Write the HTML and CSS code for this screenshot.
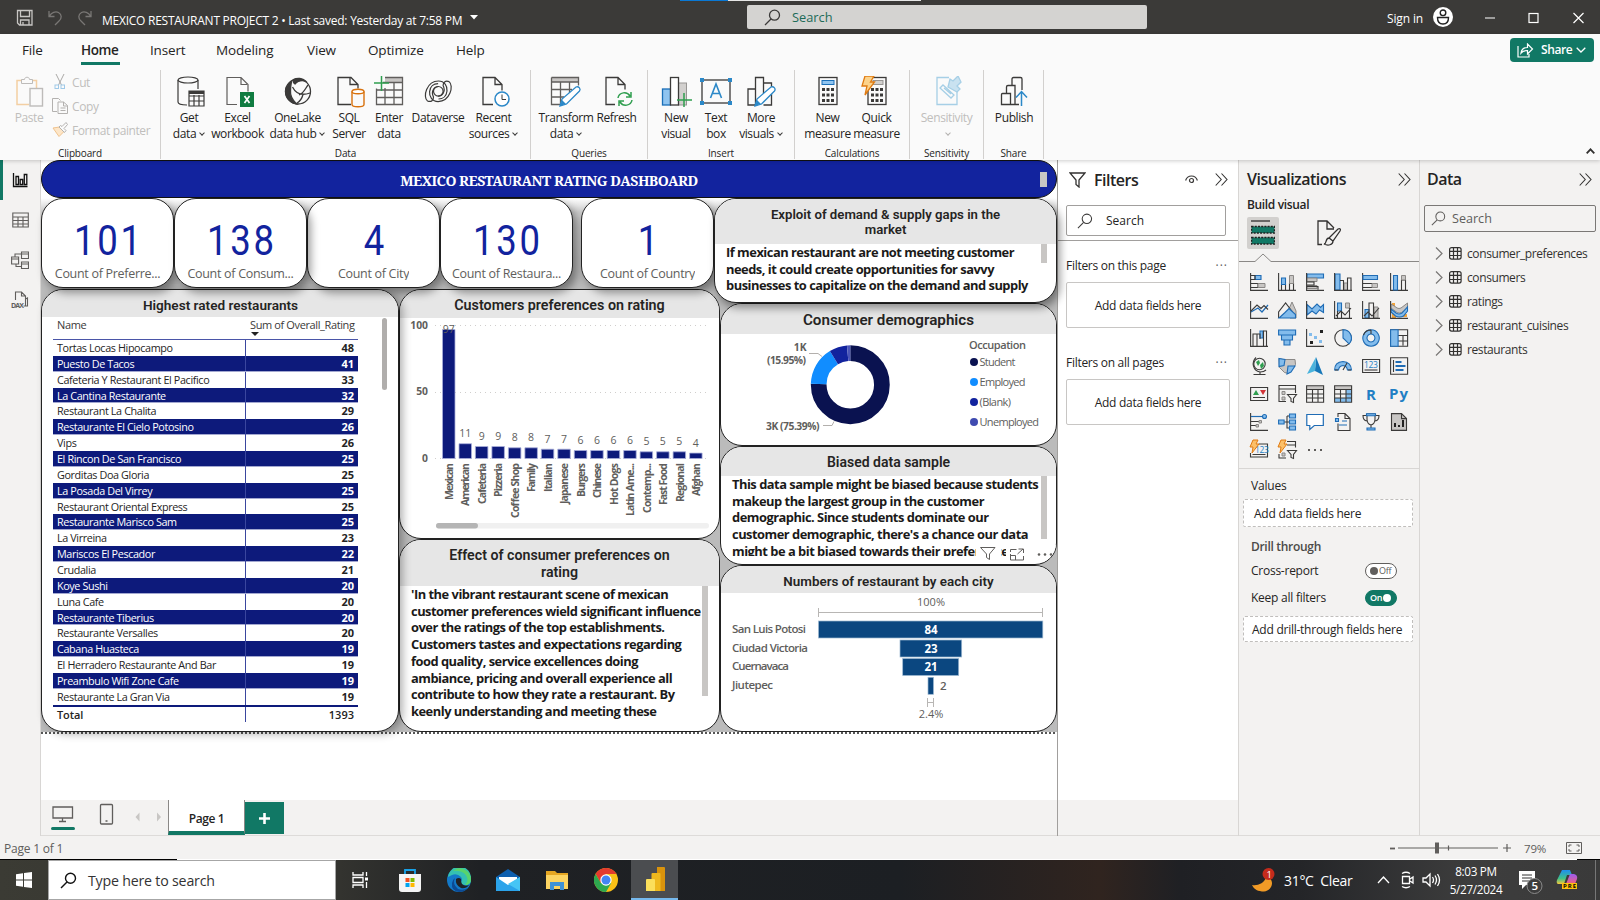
FILE: index.html
```html
<!DOCTYPE html>
<html lang="en">
<head>
<meta charset="utf-8">
<title>MEXICO RESTAURANT PROJECT 2</title>
<link rel="stylesheet" href="styles.css">
</head>
<body>
<div class="app">
  <header class="titlebar">
    <svg class="tb-quick" width="100" height="34" viewBox="0 0 100 34" fill="none">
      <path d="M17.5 10.500h14.500v14.500h-12.500l-2-2zM20.500 10.500v6h9v-6M20.500 25v-5h8.500v5M23 22v3" stroke="#c8c6c4" stroke-width="1.300"/>
      <path d="M49 11v5.500h5.500M49.500 16c2-3.500 6-5 9-3.500c3.500 2 3.500 6 .5 8.500l-4 4" stroke="#797775" stroke-width="1.300"/>
      <path d="M91 11v5.500h-5.500M90.500 16c-2-3.500-6-5-9-3.500c-3.500 2-3.500 6-.5 8.500l4 4" stroke="#797775" stroke-width="1.300"/>
    </svg>
    <span class="tb-title">MEXICO RESTAURANT PROJECT 2 • Last saved: Yesterday at 7:58 PM</span>
    <svg class="tb-caret" width="8" height="5"><path d="M0 0h8l-4 4.500z" fill="#fff"/></svg>
    <div class="tb-strip"><i></i></div>
    <div class="tb-search">
      <svg width="17" height="17" viewBox="0 0 17 17" fill="none" stroke="#3b3a39" stroke-width="1.300"><circle cx="10.500" cy="6.200" r="5"/><path d="M7 10l-6 6"/></svg>
      <span>Search</span>
    </div>
    <span class="tb-sign">Sign in</span>
    <svg class="tb-user" width="20" height="20" viewBox="0 0 20 20"><circle cx="10" cy="10" r="10" fill="#fff"/><circle cx="10" cy="5.800" r="2.800" fill="none" stroke="#222" stroke-width="1.400"/><path d="M4.500 10.500h11c0 4-2 6.500-5.500 6.500s-5.500-2.500-5.500-6.500z" fill="none" stroke="#222" stroke-width="1.400"/></svg>
    <svg class="tb-win" width="100" height="12" viewBox="0 0 100 12" fill="none" stroke="#fff" stroke-width="1.200"><path d="M1 6h10M89.500 1l10 10M99.500 1l-10 10"/><rect x="45" y="1.500" width="9" height="9"/></svg>
  </header>

  <div class="ribbon">
    <nav class="menu">
      <span class="m-file">File</span><span class="m-home">Home</span><span class="m-ins">Insert</span><span class="m-mod">Modeling</span><span class="m-view">View</span><span class="m-opt">Optimize</span><span class="m-help">Help</span>
      <div class="share"><svg width="17" height="15" viewBox="0 0 17 15" fill="none" stroke="#fff" stroke-width="1.200"><path d="M1 3v11h11v-3M4 10c.5-3.500 3-5.500 6.500-5.500v-3.500l5 5l-5 5v-3.500c-3 0-5 .7-6.500 2.500z"/></svg><span>Share</span><svg width="10" height="6" viewBox="0 0 10 6" fill="none" stroke="#fff" stroke-width="1.300"><path d="M.7.700l4.300 4.300l4.300-4.300"/></svg></div>
    </nav>
    <div class="groups">
      <section class="group g-clip">
        <div class="items">
          <div class="item off w-paste"><svg width="30" height="32" viewBox="0 0 30 32" fill="none"><path d="M8 4.500h-5v24h12" stroke="#f3cfa3" stroke-width="1.500"/><path d="M18 4.500h4.500v8" stroke="#f3cfa3" stroke-width="1.500"/><path d="M7.500 7.500v-4h3c0-3 5-3 5 0h3v4z" stroke="#bdbbb9"/><rect x="16" y="12.500" width="12.500" height="17.500" fill="#fafafa" stroke="#bdbbb9" stroke-width="1.400"/></svg><span>Paste</span></div>
          <div class="cliplist">
            <div><svg width="16" height="16" viewBox="0 0 16 16" fill="none"><path d="M4 0l5.500 11M12 0l-5.500 11" stroke="#aaa8a6"/><rect x="3" y="11" width="3.500" height="3.500" stroke="#9fc9e8"/><rect x="9" y="11" width="3.500" height="3.500" stroke="#9fc9e8"/></svg><span>Cut</span></div>
            <div><svg width="16" height="16" viewBox="0 0 16 16" fill="none" stroke="#b3b1af"><path d="M5 13.500h-4.500v-13h6l2 2M6 4h5.500l4 3.500v8h-9.500zM11.500 4v4h4M8.500 10h5M8.500 12.500h5"/></svg><span>Copy</span></div>
            <div><svg width="16" height="16" viewBox="0 0 16 16" fill="none"><path d="M1 6l6 8.500l5-5l-4.500-4.500z" fill="#fde6c8" stroke="#f0c38e"/><path d="M7 5l5.500 5.500l1.500-2l-2-2l3.500-4l-1.500-2l-4 4l-1.500-1z" stroke="#b3b1af" fill="#fafafa"/></svg><span>Format painter</span></div>
          </div>
        </div>
        <label>Clipboard</label>
      </section>
      <section class="group g-data">
        <div class="items">
          <div class="item w44"><svg width="32" height="32" viewBox="0 0 32 32" fill="none" stroke="#3b3a39" stroke-width="1.200"><ellipse cx="15" cy="4" rx="10" ry="3"/><path d="M5 4v22c0 1.500 3 3 9 3M25 4v9"/><path d="M16 15h15v15h-15zM16 20h15M16 25h15M21 19v11M26 19v11" fill="#fafafa"/><path d="M16 16.500h15" stroke-width="3"/></svg><span>Get<br>data<i class="cv"></i></span></div>
          <div class="item w53"><svg width="32" height="32" viewBox="0 0 32 32" fill="none"><path d="M15 28.500h-10v-27h14l7 7v7M19 1.500v7h6" stroke="#605e5c" stroke-width="1.200"/><rect x="18" y="16" width="14" height="15" fill="#107c41"/><path d="M22.500 20l5 7M27.500 20l-5 7" stroke="#fff" stroke-width="1.700"/></svg><span>Excel<br>workbook</span></div>
          <div class="item w67"><svg width="32" height="32" viewBox="0 0 32 32" fill="none" stroke="#3b3a39" stroke-width="1.300"><circle cx="16" cy="15.500" r="12.500"/><path d="M9.500 5.500c-5 4-7 9-5.500 13.500c2 5 6 8 10.500 9c-4-4-6.500-8-6-13c0-4 .500-7 1-9.500z" fill="#3b3a39"/><path d="M11.500 3.500c4-2 9-1.500 12 1.500c-4-1-8 0-10.500 3c-1.500-1-2-3-1.500-4.500z" fill="#3b3a39"/><path d="M10.500 11c3 6 9 9 17.500 6M21 18.500c-1 4-3 7-6.500 9M26 9c-3 4-4 8-9 10"/></svg><span>OneLake<br>data hub<i class="cv"></i></span></div>
          <div class="item w36"><svg width="32" height="32" viewBox="0 0 32 32" fill="none"><path d="M18 28.500h-13v-27h13l7 7v4M17 1.500v7h8" stroke="#3b3a39" stroke-width="1.300"/><path d="M19 15.500v13c0 3 12 3 12 0v-13" fill="#fafafa" stroke="#d8710d" stroke-width="1.400"/><ellipse cx="25" cy="15.500" rx="6" ry="2.300" fill="#fff" stroke="#d8710d" stroke-width="1.400"/></svg><span>SQL<br>Server</span></div>
          <div class="item w44"><svg width="32" height="32" viewBox="0 0 32 32" fill="none"><path d="M12 2h18v4h-18z" fill="#c8c6c4"/><path d="M12 1.500h17.500v27h-26v-16M10 6.500h19M4 14h25M4 21.500h25M12 12v16M21 7v21" stroke="#605e5c" stroke-width="1.300"/><path d="M8.500 0v15M1 7h15" stroke="#2f9e4f" stroke-width="1.500"/></svg><span>Enter<br>data</span></div>
          <div class="item w54"><svg width="32" height="32" viewBox="0 0 32 32" fill="none" stroke="#3b3a39" stroke-width="1.200"><circle cx="16.300" cy="15.300" r="4.800"/><path id="dv" d="M5.500 25c-5-4-1-20 11-20c6 0 9 5 8.500 10c-.5 5-4 8-8.500 8M5.500 25c4 1.500 6-1 6-4c-3-6 1-10.500 5-10.500"/><use href="#dv" transform="rotate(180 16.300 15.300)"/></svg><span>Dataverse</span></div>
          <div class="item w57"><svg width="32" height="32" viewBox="0 0 32 32" fill="none"><path d="M15 28.500h-10v-27h12l7 7v6M17 1.500v7h7" stroke="#3b3a39" stroke-width="1.300"/><circle cx="24" cy="23" r="7" fill="#fff" stroke="#2b88c8" stroke-width="1.500"/><path d="M24 18.500v5h4" stroke="#3b3a39"/></svg><span>Recent<br>sources<i class="cv"></i></span></div>
        </div>
        <label>Data</label>
      </section>
      <section class="group g-query">
        <div class="items">
          <div class="item w58"><svg width="32" height="32" viewBox="0 0 32 32" fill="none"><path d="M2 2h26v4h-26z" fill="#c8c6c4"/><path d="M1.500 1.500h27v8M1.500 1.500v27h10M1.500 6h27M2 13.500h20M2 21h12M10.500 6v22M19.500 6v11" stroke="#605e5c" stroke-width="1.300"/><path d="M10 30l2-7l14-12c3-1 5 2 3.500 4l-13 13z" fill="#fff" stroke="#2b88c8" stroke-width="1.300"/><path d="M10 30l2-6l4 4z" fill="#2b88c8"/></svg><span>Transform<br>data<i class="cv"></i></span></div>
          <div class="item w43"><svg width="32" height="32" viewBox="0 0 32 32" fill="none"><path d="M14 28.500h-9v-27h12l7 7v5M17 1.500v7h7" stroke="#3b3a39" stroke-width="1.300"/><path d="M17 22c1-6 9-7 12-2M30 16v5h-5M31 24c-1 6-9 7-12 2M18 30v-5h5" stroke="#2f9e4f" stroke-width="1.500"/></svg><span>Refresh</span></div>
        </div>
        <label>Queries</label>
      </section>
      <section class="group g-insert">
        <div class="items">
          <div class="item w42"><svg width="32" height="32" viewBox="0 0 32 32" fill="none"><rect x="2.500" y="13" width="8" height="16" fill="#8fc4f0" stroke="#1a6fb8" stroke-width="1.300"/><rect x="18.500" y="7" width="8" height="22" fill="#d2d0ce" stroke="#979593"/><rect x="10.500" y="1.500" width="8" height="27.500" fill="#fff" stroke="#3b3a39" stroke-width="1.300"/><path d="M24 17v14M17 24h15" stroke="#2f9e4f" stroke-width="1.500"/></svg><span>New<br>visual</span></div>
          <div class="item w38"><svg width="32" height="32" viewBox="0 0 32 32" fill="none"><rect x="2" y="4" width="28" height="23" stroke="#3b3a39" stroke-width="1.300"/><path d="M0 2h4v4h-4zM28 2h4v4h-4zM0 25h4v4h-4zM28 25h4v4h-4z" fill="#2b88c8"/><path d="M10.500 22l5.500-14l5.500 14M12.500 17.500h7" stroke="#2b88c8" stroke-width="1.600"/></svg><span>Text<br>box</span></div>
          <div class="item w52"><svg width="32" height="32" viewBox="0 0 32 32" fill="none" stroke="#3b3a39" stroke-width="1.300"><path d="M3 13h7.500v16h-7.500zM10.500 29v-27.500h8v17M18.500 7h8v5M26.500 18v11h-8"/><path d="M10 30l2-7l14-12c3-1 5 2 3.500 4l-13 13z" fill="#fff" stroke="#2b88c8"/><path d="M10 30l2-6l4 4z" fill="#2b88c8" stroke="none"/></svg><span>More<br>visuals<i class="cv"></i></span></div>
        </div>
        <label>Insert</label>
      </section>
      <section class="group g-calc">
        <div class="items">
          <div class="item w49"><svg width="32" height="32" viewBox="0 0 32 32" fill="none"><rect x="7" y="1.500" width="18" height="27" stroke="#3b3a39" stroke-width="1.300"/><rect x="10" y="4.500" width="12" height="4" fill="#8fc4f0" stroke="#1a6fb8"/><path d="M10 13.500h12M10 19h12M10 24.500h12" stroke="#3b3a39" stroke-width="3" stroke-dasharray="3 1.500"/></svg><span>New<br>measure</span></div>
          <div class="item w49"><svg width="32" height="32" viewBox="0 0 32 32" fill="none"><rect x="7" y="1.500" width="18" height="27" stroke="#3b3a39" stroke-width="1.300"/><rect x="12" y="4.500" width="10" height="4" fill="#d2d0ce" stroke="#979593"/><path d="M10 13.500h12M10 19h12M10 24.500h12" stroke="#3b3a39" stroke-width="3" stroke-dasharray="3 1.500"/><path d="M4 0h9l-3.500 6h4l-9.500 13l2-9h-5z" fill="#fcd38b" stroke="#e07b12" stroke-width="1.300"/></svg><span>Quick<br>measure</span></div>
        </div>
        <label>Calculations</label>
      </section>
      <section class="group g-sens">
        <div class="items">
          <div class="item off w73"><svg width="32" height="32" viewBox="0 0 32 32" fill="none" stroke="#a6cfe6" stroke-width="1.300"><path d="M18 1.500h-12v27h20v-14"/><path d="M9 12l3-3l11 10l-3 3zM13 12l7 6"/><path d="M17 11l9 5l3-3l-3-3l4-4l-3-6l-5 5l-3-2z" fill="#c9e2f0"/></svg><span>Sensitivity<br><i class="cv"></i></span></div>
        </div>
        <label>Sensitivity</label>
      </section>
      <section class="group g-share">
        <div class="items">
          <div class="item w60"><svg width="32" height="32" viewBox="0 0 32 32" fill="none" stroke="#3b3a39" stroke-width="1.300"><path d="M3.500 18.500q0-1 1-1h8v11h-9zM8.500 17v-6q0-1.500 1.500-1.500h7v19h-4.500M14 9v-6q0-1.500 1.500-1.500h7q1.500 0 1.500 1.500v11M17 28.500h4"/><path d="M23.500 30v-14M18 21.500l5.500-6l5.500 6" stroke="#2b88c8" stroke-width="1.500"/></svg><span>Publish</span></div>
        </div>
        <label>Share</label>
      </section>
      <svg class="collapse" width="9" height="6" viewBox="0 0 9 6" fill="none" stroke="#323130" stroke-width="1.800"><path d="M.7 5.300l3.800-4l3.800 4"/></svg>
    </div>
  </div>

  <div class="workspace">
    <aside class="rail">
      <div class="rail-item on"><svg width="17" height="16" viewBox="0 0 17 16" fill="none" stroke="#111" stroke-width="1.300"><path d="M1.500 1v13.500h14M4 12.500v-8h2.500v8zM8.200 12.500v-5h2.500v5zM12.300 12.500v-10h2.500v10z"/></svg></div>
      <div class="rail-item"><svg width="17" height="16" viewBox="0 0 17 16" fill="none" stroke="#605e5c" stroke-width="1.100"><path d="M.8 1h15.500v14h-15.500zM.8 5h15.500M.8 8.500h15.500M.8 12h15.500M6 5v10M11 5v10"/></svg></div>
      <div class="rail-item"><svg width="18" height="18" viewBox="0 0 18 18" fill="none" stroke="#605e5c" stroke-width="1.100"><path d="M.6 6h7v7h-7zM.6 8h7M10.500 1h7v6.500h-7zM10.500 3h7M10.500 11h7v6.500h-7zM10.500 13h7M4 6v-3h6M5 13v2.500h5"/></svg></div>
      <div class="rail-item"><svg width="18" height="18" viewBox="0 0 18 18" fill="none" stroke="#605e5c" stroke-width="1.100"><path d="M4.500 9v-8h6l4 4v10h-2M10.500 1v4h4M14.500 8l2-1v8h-2"/><text x="0" y="16.500" font-size="7" font-weight="700" fill="#605e5c" stroke="none" textLength="13">DAX</text></svg></div>
    </aside>

    <main class="stage">
      <div class="report">
        <div class="banner"><h1>MEXICO RESTAURANT RATING DASHBOARD</h1><i></i></div>
        <div class="board">
          <div class="left">
            <div class="cards">
              <div class="card"><b>101</b><span>Count of Preferre...</span></div>
              <div class="card"><b>138</b><span>Count of Consum...</span></div>
              <div class="card"><b>4</b><span class="cut">Count of City</span></div>
              <div class="card"><b>130</b><span>Count of Restaura...</span></div>
              <div class="card last"><b>1</b><span class="cut">Count of Country</span></div>
            </div>
            <div class="lower">
              <section class="panel p-table">
                <h2>Highest rated restaurants</h2>
                <div class="tbl-wrap">
                  <div class="tbl">
                    <div class="th"><span>Name</span><span>Sum of Overall_Rating<i></i></span></div>
                    <div class="tr"><span>Tortas Locas Hipocampo</span><b>48</b></div>
                    <div class="tr"><span>Puesto De Tacos</span><b>41</b></div>
                    <div class="tr"><span>Cafeteria Y Restaurant El Pacifico</span><b>33</b></div>
                    <div class="tr"><span>La Cantina Restaurante</span><b>32</b></div>
                    <div class="tr"><span>Restaurant La Chalita</span><b>29</b></div>
                    <div class="tr"><span>Restaurante El Cielo Potosino</span><b>26</b></div>
                    <div class="tr"><span>Vips</span><b>26</b></div>
                    <div class="tr"><span>El Rincon De San Francisco</span><b>25</b></div>
                    <div class="tr"><span>Gorditas Doa Gloria</span><b>25</b></div>
                    <div class="tr"><span>La Posada Del Virrey</span><b>25</b></div>
                    <div class="tr"><span>Restaurant Oriental Express</span><b>25</b></div>
                    <div class="tr"><span>Restaurante Marisco Sam</span><b>25</b></div>
                    <div class="tr"><span>La Virreina</span><b>23</b></div>
                    <div class="tr"><span>Mariscos El Pescador</span><b>22</b></div>
                    <div class="tr"><span>Crudalia</span><b>21</b></div>
                    <div class="tr"><span>Koye Sushi</span><b>20</b></div>
                    <div class="tr"><span>Luna Cafe</span><b>20</b></div>
                    <div class="tr"><span>Restaurante Tiberius</span><b>20</b></div>
                    <div class="tr"><span>Restaurante Versalles</span><b>20</b></div>
                    <div class="tr"><span>Cabana Huasteca</span><b>19</b></div>
                    <div class="tr"><span>El Herradero Restaurante And Bar</span><b>19</b></div>
                    <div class="tr"><span>Preambulo Wifi Zone Cafe</span><b>19</b></div>
                    <div class="tr"><span>Restaurante La Gran Via</span><b>19</b></div>
                    <div class="total"><b>Total</b><b>1393</b></div>
                  </div>
                  <i class="vbar"></i>
                </div>
              </section>
              <div class="mid">
                <section class="panel p-bar">
                  <h2>Customers preferences on rating</h2>
                  <svg class="chart" width="319" height="215" viewBox="400 318 319 215">
                    <g stroke="#d0cecc" stroke-dasharray="1 4"><path d="M435 325.500h274M435 392.500h274M435 458.500h274"/></g>
                    <g class="ax" text-anchor="end"><text x="428" y="329">100</text><text x="428" y="395">50</text><text x="428" y="462">0</text></g>
                    <g fill="#0d1a7b" stroke="#a9aedb" stroke-width=".8">
                      <path d="M442.500 329.500h12.500v129h-12.500zM459 443.700h12.500v14.800h-12.500zM475.400 446.500h12.500v12h-12.500zM491.900 446.500h12.500v12h-12.500zM508.400 447.800h12.500v10.700h-12.500zM524.900 447.800h12.500v10.700h-12.500zM541.300 449.200h12.500v9.300h-12.500zM557.800 449.200h12.500v9.300h-12.500zM574.300 450.500h12.500v8h-12.500zM590.700 450.500h12.500v8h-12.500zM607.200 450.500h12.500v8h-12.500zM623.700 450.500h12.500v8h-12.500zM640.100 451.800h12.500v6.700h-12.500zM656.600 451.800h12.500v6.700h-12.500zM673.100 451.800h12.500v6.700h-12.500zM689.600 453.100h12.500v5.400h-12.500z"/>
                    </g>
                    <g class="vals" text-anchor="middle">
                      <text x="448.700" y="333">97</text><text x="465.200" y="436.500">11</text><text x="481.700" y="439.500">9</text><text x="498.200" y="439.500">9</text><text x="514.700" y="440.500">8</text><text x="531.100" y="440.500">8</text><text x="547.600" y="442.500">7</text><text x="564" y="442.500">7</text><text x="580.500" y="443.500">6</text><text x="597" y="443.500">6</text><text x="613.500" y="443.500">6</text><text x="630" y="443.500">6</text><text x="646.400" y="444.500">5</text><text x="662.800" y="444.500">5</text><text x="679.300" y="444.500">5</text><text x="695.800" y="446.500">4</text>
                    </g>
                    <g class="cats" text-anchor="end">
                      <text transform="translate(452.500 463)rotate(-90)" textLength="37">Mexican</text><text transform="translate(469 463)rotate(-90)" textLength="43">American</text><text transform="translate(485.500 463)rotate(-90)" textLength="41">Cafeteria</text><text transform="translate(502 463)rotate(-90)" textLength="34">Pizzeria</text><text transform="translate(518.500 463)rotate(-90)" textLength="55">Coffee Shop</text><text transform="translate(535 463)rotate(-90)" textLength="29">Family</text><text transform="translate(551.500 463)rotate(-90)" textLength="29">Italian</text><text transform="translate(568 463)rotate(-90)" textLength="41">Japanese</text><text transform="translate(584.500 463)rotate(-90)" textLength="34">Burgers</text><text transform="translate(601 463)rotate(-90)" textLength="35">Chinese</text><text transform="translate(617.500 463)rotate(-90)" textLength="42">Hot Dogs</text><text transform="translate(634 463)rotate(-90)" textLength="53">Latin Ame...</text><text transform="translate(650.500 463)rotate(-90)" textLength="50">Contemp...</text><text transform="translate(667 463)rotate(-90)" textLength="42">Fast Food</text><text transform="translate(683.500 463)rotate(-90)" textLength="39">Regional</text><text transform="translate(700 463)rotate(-90)" textLength="33">Afghan</text>
                    </g>
                    <rect x="436" y="523" width="273" height="5.500" rx="2.700" fill="#f0f0f0"/><rect x="436" y="523" width="42" height="5.500" rx="2.700" fill="#b5b5b5"/>
                  </svg>
                </section>
                <section class="panel p-effect">
                  <h2>Effect of consumer preferences on<br>rating</h2>
                  <div class="note"><p>'In the vibrant restaurant scene of mexican<br>customer preferences wield significant influence<br>over the ratings of the top establishments.<br>Customers tastes and expectations regarding<br>food quality, service excellences doing<br>ambiance, pricing and overall experience all<br>contribute to how they rate a restaurant. By<br>keenly understanding and meeting these</p><i></i></div>
                </section>
              </div>
            </div>
          </div>
          <div class="right">
            <section class="panel p-exploit">
              <h2>Exploit of demand &amp; supply gaps in the<br>market</h2>
              <div class="note"><p>If mexican restaurant are not meeting customer<br>needs, it could create opportunities for savvy<br>businesses to capitalize on the demand and supply</p><i></i></div>
            </section>
            <section class="panel p-demo">
              <h2>Consumer demographics</h2>
              <svg class="chart" width="335" height="110" viewBox="721 334 335 110">
                <g transform="rotate(-90 850.300 384.700)" fill="none" stroke-width="15.700">
                  <circle cx="850.300" cy="384.700" r="31.600" stroke="#0a1250" pathLength="100" stroke-dasharray="75.390 100"/>
                  <circle cx="850.300" cy="384.700" r="31.600" stroke="#118dff" pathLength="100" stroke-dasharray="15.950 100" stroke-dashoffset="-75.390"/>
                  <circle cx="850.300" cy="384.700" r="31.600" stroke="#12239e" pathLength="100" stroke-dasharray="7.300 100" stroke-dashoffset="-91.340"/>
                  <circle cx="850.300" cy="384.700" r="31.600" stroke="#4a55b8" pathLength="100" stroke-dasharray="1.360 100" stroke-dashoffset="-98.640"/>
                </g>
                <path d="M809 353.500h9l4 3M823 425.500h9l2-4" fill="none" stroke="#b3b0ad"/>
                <g class="dl" text-anchor="end"><text x="806.500" y="351">1K</text><text x="806" y="364" textLength="39">(15.95%)</text><text x="819.500" y="430" textLength="53.500">3K (75.39%)</text></g>
                <text class="lg-t" x="969" y="349" textLength="57">Occupation</text>
                <circle cx="974" cy="362" r="4" fill="#0a1250"/><circle cx="974" cy="382" r="4" fill="#118dff"/><circle cx="974" cy="402" r="4" fill="#12239e"/><circle cx="974" cy="422" r="4" fill="#3f4bb0"/>
                <g class="lg"><text x="979.500" y="366" textLength="36">Student</text><text x="979.500" y="386" textLength="46">Employed</text><text x="979.500" y="406" textLength="31.500">(Blank)</text><text x="979.500" y="426" textLength="59.500">Unemployed</text></g>
              </svg>
            </section>
            <section class="panel p-bias">
              <h2>Biased data sample</h2>
              <div class="note"><p>This data sample might be biased because students<br>makeup the largest group in the customer<br>demographic. Since students dominate our<br>customer demographic, there's a chance our data<br>might be a bit biased towards their preference :</p><i></i></div>
              <svg class="hovertools" width="80" height="17" viewBox="0 0 80 17"><path d="M0 0h25v17h-25zM30 0h50v17h-50z" fill="#fff"/><path d="M4.500 2.500h14.500l-5.500 6.500v5.500l-3-2v-3.500zM34.500 7v-2.500h6M34.500 9v6h13v-4M47.500 8v-4h-5M34.500 10.500h5v4.500M41.500 9l5.500-5" fill="none" stroke="#605e5c"/><circle cx="63" cy="9.500" r="1.300" fill="#605e5c"/><circle cx="69" cy="9.500" r="1.300" fill="#605e5c"/><circle cx="75" cy="9.500" r="1.300" fill="#605e5c"/></svg>
            </section>
            <section class="panel p-city">
              <h2>Numbers of restaurant by each city</h2>
              <svg class="chart" width="335" height="137" viewBox="721 593 335 137">
                <path d="M818.500 608v9M1042.500 608v9M818.500 612.500h224M927.500 698v9M933.500 698v9M927.500 702.500h6" fill="none" stroke="#b8b6b4"/>
                <g fill="#0b4780" stroke="#9db9d2" stroke-width=".7"><rect x="818.500" y="621" width="224.300" height="17"/><rect x="900" y="640" width="61.700" height="17"/><rect x="902.700" y="658.500" width="56" height="17"/><rect x="928" y="677.300" width="5.500" height="17"/></g>
                <g class="pc" text-anchor="middle"><text x="931" y="606">100%</text><text x="931" y="718">2.4%</text></g>
                <g class="fl"><text x="732" y="633" textLength="74">San Luis Potosi</text><text x="732" y="652" textLength="76">Ciudad Victoria</text><text x="732" y="670" textLength="57">Cuernavaca</text><text x="732" y="689" textLength="41">Jiutepec</text><text x="940" y="690">2</text></g>
                <g class="fv" text-anchor="middle"><text x="931" y="634">84</text><text x="931" y="652.500">23</text><text x="931" y="671">21</text></g>
              </svg>
            </section>
          </div>
        </div>
        <div class="page-edge"></div>
      </div>
      <div class="pages">
        <svg width="123" height="34" viewBox="45 801 123 34" fill="none"><path d="M53 808h19.500v11h-19.500zM62.500 819v3M59 822.500h7" stroke="#605e5c" stroke-width="1.300"/><rect x="51" y="828" width="24" height="3" rx="1.500" fill="#117865"/><rect x="100.500" y="805.500" width="12" height="19.500" rx="1" stroke="#605e5c" stroke-width="1.300"/><path d="M105.500 822h2" stroke="#605e5c" stroke-width="1.500"/><path d="M139.500 813.500v9l-4-4.500zM157 813.500v9l4-4.500z" fill="#c8c6c4"/></svg>
        <div class="tab">Page 1</div>
        <div class="add"><svg width="11" height="11"><path d="M5.500 0v11M0 5.500h11" stroke="#fff" stroke-width="2.600"/></svg></div>
      </div>
    </main>

    <aside class="filters">
      <header><svg width="17" height="16" viewBox="0 0 17 16" fill="none" stroke="#323130" stroke-width="1.300"><path d="M1 1h15l-6 7v7l-3-2.500v-4.500z"/></svg><h3>Filters</h3><svg class="eye" width="13" height="9" viewBox="0 0 13 9" fill="none" stroke="#3b3a39" stroke-width="1.200"><path d="M.6 5.500c2-6 9.800-6 11.800 0"/><circle cx="6.500" cy="5.500" r="2"/></svg><svg class="dbl" width="13" height="13" viewBox="0 0 13 13" fill="none" stroke="#323130" stroke-width="1.100"><path d="M.7.500l5.500 6l-5.500 6M6.500.500l5.500 6l-5.500 6"/></svg></header>
      <div class="f-search"><svg width="16" height="16" viewBox="0 0 17 17" fill="none" stroke="#3b3a39" stroke-width="1.100"><circle cx="10.500" cy="6.200" r="5"/><path d="M7 10l-6 6"/></svg><span>Search</span></div>
      <div class="f-block"><div class="f-head"><span>Filters on this page</span><i>···</i></div><div class="f-drop">Add data fields here</div></div>
      <div class="f-block second"><div class="f-head"><span>Filters on all pages</span><i>···</i></div><div class="f-drop">Add data fields here</div></div>
      <div class="f-foot"></div>
    </aside>

    <aside class="viz">
      <header><h3>Visualizations</h3><svg class="dbl" width="13" height="13" viewBox="0 0 13 13" fill="none" stroke="#323130" stroke-width="1.100"><path d="M.7.500l5.500 6l-5.500 6M6.500.500l5.500 6l-5.500 6"/></svg></header>
      <div class="v-sub">Build visual</div>
      <div class="v-modes">
        <div class="v-mode on"><svg width="24" height="26" viewBox="0 0 24 26"><path d="M0 1h19" stroke="#222" stroke-width="1.200"/><path d="M.6 6.500h22.800v6.500h-22.800zM.6 17.500h22.800v6.500h-22.800z" fill="#117865" stroke="#222" stroke-width="1.300" stroke-dasharray="2 1.200"/></svg></div>
        <div class="v-mode"><svg width="25" height="26" viewBox="0 0 25 26" fill="none" stroke="#323130" stroke-width="1.300"><path d="M5 24.500h-4v-23.500h9l7 7M10 1v8h7"/><path d="M12 18l9-9c2-1 3 0 2 2l-7 10l-4-3zM7 24c3 0 1-6 5-6l4 3c0 4-5 5-9 3z" fill="#f3f2f1"/></svg></div>
      </div>
      <svg class="v-rule" width="180" height="10" viewBox="0 0 180 10" fill="none" stroke="#8a8886"><path d="M0 8.500h16l8-7.500l8 7.500h148"/></svg>
      <div class="v-grid">
        <svg viewBox="0 0 18 18"><path class="k" d="M.6 0v17.400h17.400"/><path class="b" d="M5 2.500h6v4h-6z"/><path class="k" d="M1 2.500h4v4h-4M1 10.500h7v4h-7"/><path class="g" d="M8 10.500h7v4h-7z"/></svg>
        <svg viewBox="0 0 18 18"><path class="k" d="M.6 0v17.400h17.400M3.500 17v-5.500h4v5.500M11.500 17v-6.500h4v6.500"/><path class="b" d="M3.500 5h4v6.500h-4z"/><path class="g" d="M11.500 2.500h4v8h-4z"/></svg>
        <svg viewBox="0 0 18 18"><path class="b" d="M1 1h16.500v4h-16.500z"/><path class="g" d="M1 5h10v3.500h-10zM1 12.500h10v3h-10z"/><path class="k" d="M.6 0v17.400h17.400M1 9h7v3h-7M1 13.500h11v3"/></svg>
        <svg viewBox="0 0 18 18"><path class="b" d="M1 1h5v16h-5z"/><path class="g" d="M10 10h3.500v7h-3.500z"/><path class="k" d="M.6 0v17.400h17.400M6 7.500h3.500v9.500M13.500 17v-12h3.500v12"/></svg>
        <svg viewBox="0 0 18 18"><path class="k" d="M.6 0v17.400h17.400M1 10.500h9M1 14.500h9"/><path class="b" d="M1 2.500h14.500v4h-14.500z"/><path class="g" d="M10 10.500h5.500v4h-5.500z"/></svg>
        <svg viewBox="0 0 18 18"><path class="k" d="M.6 0v17.400h17.400M11.500 17v-10h4v10"/><path class="b" d="M3.500 2.500h4v14.500h-4z"/><path class="g" d="M11.500 2.500h4v4.500h-4z"/></svg>

        <svg viewBox="0 0 18 18"><path class="k" d="M.6 0v17.400h17.400"/><path class="bl" d="M1 11l7-4l4 4l6-7"/><path class="k" d="M1 10l6-6l4 3.500l3-3l4 4"/></svg>
        <svg viewBox="0 0 18 18"><path class="g" d="M10 10l4-9l4 9v7h-6z"/><path class="k" d="M.6 17v-6l7-9l7 9" fill="#fff"/><path class="b" d="M1 17l6-5.500l4-4l6.500 6v3.500z"/></svg>
        <svg viewBox="0 0 18 18"><path class="b" d="M1 3.500l5 4.500l5-5l3.500 3.500l3-3v8l-4-2.500l-3.500 4l-4-3l-5 4z"/><path class="k" d="M.6 0v17.400h17.400"/></svg>
        <svg viewBox="0 0 18 18"><path class="b" d="M3.500 2h4v8h-4z"/><path class="g" d="M11.500 2h4v5h-4z"/><path class="k" d="M.6 0v17.400h17.400M3.500 10v7M7.500 10v7M15.500 7v10M2 15l5-5l4 4l6-7"/></svg>
        <svg viewBox="0 0 18 18"><path class="b" d="M3 8.500h4v8.500h-4z"/><path class="g" d="M12 6h4v11h-4z"/><path class="k" d="M.6 0v17.400h17.400M7 17v-15h4.500v15M2 15l4-4l4 4l7-8"/></svg>
        <svg viewBox="0 0 18 18"><path d="M2 2h3v3h-3zM2 12h4v5h-4zM12 13h5v3h-5z" fill="#f2a33a"/><path class="g" d="M1 3l4 2.500q4 4 8 0l4.500-3.500v5l-4 3q-4 4-8.500 0l-4-3z"/><path class="b" d="M1 8l5 4q3 2 6 0l5.500-6v4l-4 5q-4 2-8 0l-4.500-4z"/><path class="k" d="M.6 0v17.400h17.400"/></svg>

        <svg viewBox="0 0 18 18"><path class="b" d="M10 2h3v7h-3z"/><path class="k" d="M.6 0v17.400h17.400M3 17v-12h4v12M7 5h3v5M13.500 17v-15h3v15"/></svg>
        <svg viewBox="0 0 18 18"><path class="b" d="M.6 1h17v5h-17zM3.500 6h11v5h-11zM6 11h6v5h-6z"/></svg>
        <svg viewBox="0 0 18 18"><path class="k" d="M.6 0v17.400h17.400"/><path d="M4 12h3v3h-3zM14 1h3v3h-3z" fill="#222"/><path d="M3 4h3v3h-3zM8 7h3v3h-3zM13 11h3v3h-3z" fill="#83bcec"/></svg>
        <svg viewBox="0 0 18 18"><circle class="k" cx="9" cy="9" r="8.200" fill="#fff"/><path class="b" d="M9 .8a8.200 8.200 0 0 1 6 14l-6-5.800z"/></svg>
        <svg viewBox="0 0 18 18"><path class="b" fill-rule="evenodd" d="M9 .8a8.200 8.200 0 1 0 .1 0zM9 5a4 4 0 1 1-.1 0z"/><path class="k" d="M9 1v4M1.500 6q2-5 7.500-5"/></svg>
        <svg viewBox="0 0 18 18"><path class="k" d="M.6.800h17v16.500h-17zM8 6.500h10M8 12h10M13 6.500v10"/><path class="b" d="M.6.800h7.500v16.500h-7.500z"/></svg>

        <svg viewBox="0 0 18 18"><circle class="k" cx="9.500" cy="7" r="5.700"/><path class="k" d="M6 .5c-5 5-3 13 4 14.500c3 0 5-1 6-2M10 15v2.500M3.500 17.500h12"/><path d="M6 5l3-2l1 3l-2 3zM10 8l3-3l1 4l-3 3z" fill="#2f9e4f"/></svg>
        <svg viewBox="0 0 18 18"><path class="g" d="M1 1.500l4 1h12l.5 5l-3 4l-4 5l-4-1l-5-5z"/><path class="b" d="M1 1.500l6 1l-1 6l-5 1zM10 9h7l-4 6l-4 2z"/></svg>
        <svg viewBox="0 0 18 18"><path d="M10 0l7 18l-8-4z" fill="#1677b8"/><path d="M10 0l-9 17l8-3z" fill="#4ab3dc"/></svg>
        <svg viewBox="0 0 18 18"><path class="b" d="M.6 13q0-8 8.400-8.500q8 .5 8.500 8.500h-4q-.5-4-4.500-4.500q-4 .5-4.500 4.500z"/><path class="k" d="M9 13l4-7M1 13h3M14 13h3"/></svg>
        <svg viewBox="0 0 18 18"><path class="k" d="M.6 2.500h17v13h-17z"/><path class="k" d="M2.500 13h13"/><text x="2" y="11" class="n">123</text></svg>
        <svg viewBox="0 0 18 18"><path class="k" d="M.6.800h17v16.500h-17zM3.500 3v12"/><path d="M5.500 5h6M5.500 9h10M5.500 13h8" stroke="#1f6cb5" stroke-width="2"/></svg>

        <svg viewBox="0 0 18 18"><path class="k" d="M.6 2.500h17v13h-17zM3 12.500h12"/><path d="M3 10l3-5l3 5z" fill="#2f9e4f"/><path d="M10 5h6l-3 5z" fill="#d13438"/></svg>
        <svg viewBox="0 0 18 18"><path class="k" d="M17.500 8v-7.500h-16.500v16h7M1 4h16.500"/><path class="g" d="M4 6.500h3v3h-3zM4 12h3v3h-3z"/><path class="k" d="M9.500 9.500h9l-3 4v4l-2.500-1v-3z" fill="#fff"/></svg>
        <svg viewBox="0 0 18 18"><path d="M1 1h16.500v3h-16.500z" fill="#c8c6c4"/><path class="k" d="M.6.800h17v16.500h-17zM.6 4.500h17M.6 9h17M.6 13h17M6.500 4v13M12 4v13"/></svg>
        <svg viewBox="0 0 18 18"><path d="M1 1h16.500v3h-16.500z" fill="#c8c6c4"/><path d="M12 4h6v13h-17v-4h11z" fill="#83bcec"/><path class="k" d="M.6.800h17v16.500h-17zM.6 4.500h17M.6 9h17M.6 13h17M6.500 4v13M12 4v13"/></svg>
        <svg viewBox="0 0 18 18"><text x="4" y="14.500" class="ltr">R</text></svg>
        <svg viewBox="0 0 18 18"><text x="-1" y="14" class="ltr" textLength="19">Py</text></svg>

        <svg viewBox="0 0 18 18"><path class="k" d="M.6 0v17.400h17.400M1 8.500h8M1 12.500h5"/><path class="bl" d="M1 3.500h12"/><circle class="b" cx="14.500" cy="3.500" r="2"/><path class="g" d="M9 7.500h2.500v2.500h-2.500zM6 11.500h2.500v2.500h-2.500z"/></svg>
        <svg viewBox="0 0 18 18"><path class="k" d="M6 9h6M9 3v12h3M9 3h3"/><path class="b" d="M.6 7h5.500v4h-5.500zM11.500 1h6v4h-6zM11.500 7h6v4h-6zM11.500 13h6v4h-6z"/></svg>
        <svg viewBox="0 0 18 18"><path d="M.8 1.500h16.500v11h-9l-4.500 4v-4h-3z" fill="#fff" stroke="#1f6cb5" stroke-width="1.200"/></svg>
        <svg viewBox="0 0 18 18"><path class="k" d="M4 4v-3.500h7l5 5v12h-12v-7M11 .5v5h5"/><path class="b" d="M1.500 5.500h3v3h-3z"/><path class="bl" d="M8 8h5M5 12h8"/></svg>
        <svg viewBox="0 0 18 18"><path class="k" d="M5 1h8v5q0 5-4 6q-4-1-4-6zM5 2.500h-4q0 5 4 5.500M13 2.500h4q0 5-4 5.500M9 12v3"/><path class="b" d="M4.500.800h9v2h-9zM5 15h8v2h-8z"/></svg>
        <svg viewBox="0 0 18 18"><path class="k fillg" d="M1.500.600h10l5 5v11.800h-15z"/><path class="k" d="M11.500.600v5h5"/><path d="M5 14v-4M9 14v-2M13 14v-7" stroke="#222" stroke-width="2"/></svg>

        <svg viewBox="0 0 18 18"><path class="k" d="M9 3h8.500v13h-17v-4M2.500 13.500h13"/><text x="5" y="11.500" class="n">123</text><path d="M3-1h5l-2 4h3l-7 9l1-6h-3z" fill="#fcc069" stroke="#e07b12"/></svg>
        <svg viewBox="0 0 18 18"><path class="k" d="M9 .5h8.500v6M1 13v4h7M9 4h8"/><path class="g" d="M4 12h3v3h-3z"/><path class="k" d="M9.500 9.500h9l-3 4v4l-2.500-1v-3z" fill="#fff"/><path d="M3-1h5l-2 4h3l-7 9l1-6h-3z" fill="#fcc069" stroke="#e07b12"/></svg>
        <svg viewBox="0 0 18 18"><path d="M2 8h2v2h-2zM8 8h2v2h-2zM14 8h2v2h-2z" fill="#605e5c"/></svg>
      </div>
      <div class="v-wells">
        <div class="v-label">Values</div>
        <div class="v-drop">Add data fields here</div>
        <div class="v-label strong">Drill through</div>
        <div class="v-row"><span>Cross-report</span><div class="toggle"><i></i><em>Off</em></div></div>
        <div class="v-row"><span>Keep all filters</span><div class="toggle on"><em>On</em><i></i></div></div>
        <div class="v-drop drill">Add drill-through fields here</div>
      </div>
    </aside>

    <aside class="data">
      <header><h3>Data</h3><svg class="dbl" width="13" height="13" viewBox="0 0 13 13" fill="none" stroke="#323130" stroke-width="1.100"><path d="M.7.500l5.500 6l-5.500 6M6.500.500l5.500 6l-5.500 6"/></svg></header>
      <div class="d-search"><svg width="15" height="15" viewBox="0 0 17 17" fill="none" stroke="#605e5c" stroke-width="1.200"><circle cx="10.500" cy="6.200" r="5"/><path d="M7 10l-6 6"/></svg><span>Search</span></div>
      <ul>
        <li><svg viewBox="0 0 27 13"><path class="ch" d="M1 .5l6 6l-6 6"/><rect x="14.600" y=".6" width="11.500" height="11.500" rx="2"/><path d="M15 4.300h11M15 8.500h11M18.500 1v11M22.500 1v11"/></svg>consumer_preferences</li>
        <li><svg viewBox="0 0 27 13"><path class="ch" d="M1 .5l6 6l-6 6"/><rect x="14.600" y=".6" width="11.500" height="11.500" rx="2"/><path d="M15 4.300h11M15 8.500h11M18.500 1v11M22.500 1v11"/></svg>consumers</li>
        <li><svg viewBox="0 0 27 13"><path class="ch" d="M1 .5l6 6l-6 6"/><rect x="14.600" y=".6" width="11.500" height="11.500" rx="2"/><path d="M15 4.300h11M15 8.500h11M18.500 1v11M22.500 1v11"/></svg>ratings</li>
        <li><svg viewBox="0 0 27 13"><path class="ch" d="M1 .5l6 6l-6 6"/><rect x="14.600" y=".6" width="11.500" height="11.500" rx="2"/><path d="M15 4.300h11M15 8.500h11M18.500 1v11M22.500 1v11"/></svg>restaurant_cuisines</li>
        <li><svg viewBox="0 0 27 13"><path class="ch" d="M1 .5l6 6l-6 6"/><rect x="14.600" y=".6" width="11.500" height="11.500" rx="2"/><path d="M15 4.300h11M15 8.500h11M18.500 1v11M22.500 1v11"/></svg>restaurants</li>
      </ul>
    </aside>
  </div>

  <footer class="status">
    <span>Page 1 of 1</span>
    <svg width="123" height="12" viewBox="0 0 123 12" fill="none" stroke="#605e5c"><path d="M0 6.500h5" stroke-width="1.800"/><path d="M8 6h100M58.500 3.500v5M113 6h8M117 2v8" stroke-width="1.200"/><path d="M47 .5v11" stroke-width="4"/></svg>
    <span class="zoom">79%</span>
    <svg width="16" height="12" viewBox="0 0 16 12" fill="none" stroke="#605e5c"><path d="M.5.500h15v11h-15zM3 5v-2h2.500M10.500 3h2.500v2M3 7v2h2.500M10.500 9h2.500v-2"/></svg>
  </footer>
  <div class="seam"><i></i><i></i></div>

  <footer class="taskbar">
    <div class="start"><svg width="16" height="16" viewBox="0 0 16 16" fill="#fff"><path d="M0 2.200l7-1v6.300h-7zM8 1.100l8-1.100v7.500h-8zM0 8.500h7v6.300l-7-1zM8 8.500h8v7.500l-8-1.100z"/></svg></div>
    <div class="t-search"><svg width="17" height="17" viewBox="0 0 17 17" fill="none" stroke="#111" stroke-width="1.400"><circle cx="10.500" cy="6.200" r="5"/><path d="M7 10l-6 6"/></svg><span>Type here to search</span></div>
    <div class="t-apps">
      <svg viewBox="0 0 24 24" fill="none" stroke="#fff" stroke-width="1.300"><path d="M4 4v3h10v-3M4 20v-3h10v3M4 9.500h10v5h-10zM17.500 4v4M17.500 14v6"/><path d="M16 11h3" stroke-width="3"/></svg>
      <svg viewBox="0 0 24 24"><path d="M7 6v-4h10v4" fill="none" stroke="#18a2e8" stroke-width="1.800"/><path d="M1 6h22v15q0 3-3 3h-16q-3 0-3-3z" fill="#f4f4f4"/><path fill="#f25022" d="M7.500 10h4v4h-4z"/><path fill="#7fba00" d="M12.500 10h4v4h-4z"/><path fill="#00a4ef" d="M7.500 15h4v4h-4z"/><path fill="#ffb900" d="M12.500 15h4v4h-4z"/></svg>
      <svg viewBox="0 0 24 24"><circle cx="12" cy="12" r="12" fill="#1379c8"/><path d="M1 9a11.500 11.500 0 0 1 23 2q0 6-6 6q-4 0-4-3q2-2 0-5q-4-4-9-2z" fill="#35c1b1"/><path d="M12 0a12 12 0 0 1 12 11q0 6-6 6q5-5 0-11q-5-4-12-3q3-3 6-3z" fill="#58d46c"/><path d="M8 10q-3 6 3 11q5 2 10-1q-4 4-9 4q-8-1-7-9q1-4 3-5z" fill="#0c4a94"/><path d="M9 11q3-2 5 0q0 4 1 5q3 3 7 1q-3 4-8 3q-6-3-5-9z" fill="#202226"/></svg>
      <svg viewBox="0 0 24 24"><path d="M0 9l12-8l12 8v13h-24z" fill="#0e5fae"/><path d="M3 9h18v8h-18z" fill="#fff"/><path d="M0 9l12 8l12-8v14h-24z" fill="#2ba3ea"/><path d="M12 16l12 7v-14z" fill="#46c5f5"/></svg>
      <svg viewBox="0 0 24 24"><path d="M1 3h9l2 2h11v6h-22z" fill="#e5a622"/><path d="M1 7h22v14h-22z" fill="#fcd462"/><path d="M5 22v-8h14v8h-4v-4h-6v4z" fill="#3f92d6"/></svg>
      <svg viewBox="0 0 24 24"><circle cx="12" cy="12" r="12" fill="#fbc116"/><path d="M1.600 6a12 12 0 0 1 20.800 0h-10.400l-5.200 9z" fill="#e33b2e"/><path d="M1.600 6a12 12 0 0 0 10.400 18l5.200-9h-10.400z" fill="#2da94f"/><circle cx="12" cy="12" r="5.700" fill="#fff"/><circle cx="12" cy="12" r="4.500" fill="#4285f4"/></svg>
      <div class="t-active"><svg viewBox="0 0 24 24"><path d="M14 0h7q1 0 1 1v23h-8z" fill="#d9930c"/><path d="M8.500 7q0-1 1-1h7q1 0 1 1v17h-9z" fill="#efb91e"/><path d="M3 13q0-1 1-1h7q1 0 1 1v11h-9z" fill="#fbdf5b"/></svg></div>
    </div>
    <div class="t-tray">
      <svg class="moon" width="24" height="24" viewBox="0 0 24 24"><path d="M1 17c5 1 12-1 15-9c8 4 6 14-3 15.500c-6 0-10-2-12-6.500z" fill="#f29b26"/><circle cx="17.500" cy="6" r="6" fill="#c42b1c"/><text x="15.500" y="9.500" fill="#fff" font-size="9.500">1</text></svg>
      <span class="weather">31°C&nbsp; Clear</span>
      <svg class="trayicons" width="64" height="18" viewBox="0 0 64 18" fill="none" stroke="#fff" stroke-width="1.300"><path d="M1 12l5.500-6l5.500 6M25.500 5.500h7v7h-7zM33 8l3-2v6l-3-2M25 2.500q4-2.500 8 0M25 15.500q4 2.500 8 0M46 7h3l4-4v12l-4-4h-3zM55.500 6q2 3 0 6M58 4.500q3 4.500 0 9M60.500 3q4 6 0 12"/></svg>
      <div class="clock"><span>8:03 PM</span><span>5/27/2024</span></div>
      <svg class="notif" width="26" height="26" viewBox="0 0 26 26"><path d="M1 2h16v14h-9l-4 4v-4h-3z" fill="#fff"/><path d="M4 6h10M4 9h10M4 12h7" stroke="#333" stroke-width="1.200"/><circle cx="16.500" cy="17" r="7.500" fill="#3c3c3c" stroke="#8a8a8a"/><text x="13.500" y="21" fill="#fff" font-size="11.500" font-weight="600">5</text></svg>
      <svg class="copilot" width="22" height="22" viewBox="0 0 22 22"><defs><linearGradient id="ca" x1="0" y1="0" x2="0" y2="1"><stop offset="0" stop-color="#1f8df0"/><stop offset=".6" stop-color="#3ec08a"/><stop offset="1" stop-color="#f6c73b"/></linearGradient><linearGradient id="cb" x1="0" y1="0" x2="0" y2="1"><stop offset="0" stop-color="#9a5cf0"/><stop offset="1" stop-color="#f2607a"/></linearGradient></defs><path d="M6 1h8l2 5h-5l-3 9h-6q-2-1-1-4z" fill="url(#ca)"/><path d="M14 5h4q4 1 3 5l-2 5h-9z" fill="url(#cb)"/><path d="M6 14h15v6h-15z" fill="#ffc20e"/><text x="7" y="19.200" font-size="6" font-weight="700" textLength="13">PRE</text></svg>
      <i class="peek"></i>
    </div>
  </footer>
</div>
</body>
</html>
```
FILE: styles.css
```css
* { box-sizing: border-box; }
body { margin: 0; width: 1600px; height: 900px; overflow: hidden; font-family: "Open Sans", "Noto Sans", sans-serif; font-size: 12px; color: #252423; background: #f3f2f1; }
svg { display: block; flex: none; }
h1, h2, h3, p, ul { margin: 0; padding: 0; }
i, em { font-style: normal; }
.app { display: flex; flex-direction: column; width: 1600px; height: 900px; white-space: nowrap; }

/* title bar */
.titlebar { position: relative; height: 34px; flex: none; background: #3b3a38; color: #fff; display: flex; align-items: center; }
.tb-title { width: 361px; margin-left: 2px; padding-top: 6px; letter-spacing: -.25px; }
.tb-caret { margin-left: 7px; }
.tb-strip { position: absolute; top: 0; left: 680px; width: 241px; height: 1px; background: #e6e6e6; }
.tb-strip i { display: block; width: 48px; height: 1px; background: #0a78d4; }
.tb-search { position: absolute; left: 747px; top: 5px; width: 400px; height: 24px; background: #d4d3d1; border-radius: 2px; display: flex; align-items: center; padding-left: 17px; color: #1d6b58; font-size: 12.800px; }
.tb-search span { margin-left: 11px; }
.tb-sign { margin-left: auto; padding-top: 2px; letter-spacing: -.15px; }
.tb-user { margin-left: 10px; }
.tb-win { margin: 2px 16px 0 31px; }

/* ribbon */
.ribbon { height: 126px; flex: none; background: #fafafa; position: relative; z-index: 5; box-shadow: 0 1px 4px rgba(0, 0, 0, .2); }
.menu { height: 34px; display: flex; font-size: 13.500px; line-height: 32px; padding-left: 22px; position: relative; letter-spacing: -.15px; }
.menu span { display: block; height: 31px; }
.m-file { width: 59px; }
.m-home { width: 39px; font-weight: 600; margin-right: 30px; border-bottom: 3px solid #117865; letter-spacing: -.4px; }
.m-ins { width: 66px; }
.m-mod { width: 91px; }
.m-view { width: 61px; }
.m-opt { width: 88px; }
.share { position: absolute; left: 1510px; top: 4px; width: 84px; height: 24px; border-radius: 4px; background: #117865; color: #fff; display: flex; align-items: center; padding-left: 7px; font-size: 12px; font-weight: 600; letter-spacing: -.4px; line-height: 24px; }
.share span { height: auto; margin: 0 4px 0 7px; }
.groups { display: flex; height: 92px; position: relative; }
.group { display: flex; flex-direction: column; height: 89px; margin-top: 2px; border-right: 1px solid #d2d0ce; flex: none; }
.group label { text-align: center; font-size: 10px; line-height: 12px; letter-spacing: -.15px; margin-top: auto; }
.items { display: flex; padding-top: 6px; height: 74px; }
.item { display: flex; flex-direction: column; align-items: center; font-size: 12px; line-height: 16px; text-align: center; letter-spacing: -.4px; flex: none; }
.item span { margin-top: 2px; }
.item.off, .cliplist { color: #c0bebc; }
.cv { display: inline-block; width: 4px; height: 4px; border: solid #3b3a39; border-width: 0 1.500px 1.500px 0; transform: rotate(45deg); margin: 0 1px 3px 4px; }
.off .cv { border-color: #b3b1af; }
.g-clip { width: 161px; }
.g-data { width: 370px; } .g-data .items, .g-query .items { padding-left: 6px; }
.g-query { width: 117px; }
.g-insert { width: 147px; } .g-insert .items { padding-left: 7px; }
.g-calc { width: 115px; } .g-calc .items { padding-left: 8px; }
.g-sens { width: 74px; }
.g-share { width: 60px; }
.w-paste { width: 28px; margin-left: 15px; } .w44 { width: 44px; } .w53 { width: 53px; } .w67 { width: 67px; } .w36 { width: 36px; } .w54 { width: 54px; } .w57 { width: 57px; } .w58 { width: 58px; } .w43 { width: 43px; } .w42 { width: 42px; } .w38 { width: 38px; } .w52 { width: 52px; } .w49 { width: 49px; } .w73 { width: 73px; } .w60 { width: 60px; }
.cliplist { margin: -6px 0 0 9px; }
.cliplist div { display: flex; align-items: center; height: 24px; gap: 4px; letter-spacing: -.4px; }
.collapse { position: absolute; left: 1586px; top: 80px; }

/* work area */
.workspace { display: flex; height: 676px; flex: none; }
.rail { width: 41px; flex: none; border-right: 1px solid #d8d6d4; background: #f3f2f1; }
.rail-item { height: 40px; display: flex; align-items: center; justify-content: center; }
.rail-item.on { border-left: 3px solid #117865; padding-right: 3px; }
.stage { width: 1016px; flex: none; display: flex; flex-direction: column; background: #fff; }
.report { height: 640px; }
.banner { position: relative; height: 38px; border: 1px solid #111; border-radius: 19px; background: #12239e; display: flex; align-items: center; justify-content: center; }
.banner h1 { font: 700 14px "Noto Serif", "Liberation Serif", serif; color: #fff; padding-top: 3px; letter-spacing: -.5px; }
.banner i { position: absolute; right: 9px; top: 11px; width: 7px; height: 15px; background: #c8c6c4; }
.board { display: flex; height: 534px; background: linear-gradient(#fff 0, #ccc 14px, #bbb 60px); }
.left { width: 679px; flex: none; display: flex; flex-direction: column; }
.cards { display: flex; height: 91px; position: relative; z-index: 4; }
.card { width: 133px; height: 90px; flex: none; border: 1px solid #222; border-radius: 22px; background: #fff; display: flex; flex-direction: column; align-items: center; box-shadow: 4px 5px 9px rgba(0, 0, 0, .38); position: relative; z-index: 1; }
.card:nth-child(2) { z-index: 2; }
.card.last { margin-left: 8px; }
.card b { font: 400 43px/44px Roboto, sans-serif; letter-spacing: 3.300px; padding-left: 4px; transform: scaleX(.85); color: #12239e; margin-top: 19px; }
.card span { font-size: 12.500px; line-height: 16px; letter-spacing: -.3px; color: #605e5c; margin-top: 4px; }
.card .cut { height: 14px; overflow: hidden; }
.lower { display: flex; height: 443px; }
.panel { border: 1px solid #222; border-radius: 22px; background: #fff; overflow: hidden; flex: none; position: relative; }
.panel h2 { background: #e6e6e6; font: 600 14px/17px Roboto, sans-serif; text-align: center; color: #252423; }
.p-table { width: 358px; height: 443px; z-index: 2; box-shadow: 4px 2px 9px rgba(0, 0, 0, .3); }
.p-table h2 { height: 27px; padding: 7px 0 0 1px; font-size: 13.600px; }
.tbl-wrap { display: flex; padding-left: 11px; }
.tbl { width: 305px; flex: none; font-size: 10.800px; letter-spacing: -.38px; }
.th { display: grid; grid-template-columns: 193px 112px; height: 23px; border-bottom: 1px solid #4a55a8; line-height: 16px; color: #3b3a39; font-size: 11px; }
.th span { padding-left: 4px; position: relative; }
.th i { position: absolute; left: 5px; top: 15px; border: solid transparent; border-width: 4px 4px 0; border-top-color: #222; }
.tr, .total { display: grid; grid-template-columns: 193px 112px; height: 15.870px; line-height: 15.500px; }
.tr span, .total b:first-child { padding-left: 4px; border-right: 1px solid #3a469e; }
.tr b, .total b:last-child { text-align: right; padding-right: 4px; font-weight: 700; font-size: 11px; letter-spacing: 0; }
.tr:nth-child(odd) { background: #0d1a7b; color: #fff; border-bottom: 1px solid #a3a8d0; }
.total { border-top: 2px solid #0d1a7b; height: 17px; font-weight: 600; }
.total b { font-weight: 600; font-size: 11px; letter-spacing: -.1px; }
.total b:last-child { font-weight: 600; }
.vbar { width: 5px; height: 72px; border-radius: 3px; background: #b0aeac; margin: 1px 0 0 24px; }
.mid { width: 321px; flex: none; }
.p-bar { height: 250px; }
.p-bar h2 { height: 28px; padding-top: 7px; font-size: 14.300px; }
.p-effect { height: 193px; }
.p-effect h2 { height: 46px; padding-top: 7px; font-size: 14.200px; }
.ax, .cats { font-size: 10.300px; font-weight: 700; fill: #605e5c; }
.vals { font-size: 10.500px; fill: #605e5c; }
.cats { font-size: 10.500px; }
.note { position: relative; font-weight: 700; font-size: 12.900px; line-height: 16.700px; letter-spacing: -.5px; color: #1b1a19; }
.note i { position: absolute; top: 0; right: 9px; width: 6px; background: #c8c6c4; }
.p-effect .note { padding-left: 11px; }
.p-effect .note i { height: 110px; right: 11px; }
.right { width: 337px; flex: none; position: relative; }
.p-exploit { width: 343px; height: 105px; margin-left: -6px; z-index: 5; box-shadow: 3px 5px 9px rgba(0, 0, 0, .4); }
.p-exploit h2 { height: 45px; padding: 8px 0 0 0; line-height: 15px; font-size: 13.200px; }
.p-exploit .note { padding-left: 11px; }
.p-exploit .note i { height: 19px; }
.p-demo { height: 143px; }
.p-demo h2 { height: 30px; padding-top: 8px; font-size: 15.200px; }
.dl { font-size: 10.300px; font-weight: 700; fill: #605e5c; }
.lg { font-size: 11px; fill: #605e5c; }
.lg-t { font-size: 11px; font-weight: 600; fill: #605e5c; }
.p-bias { height: 119px; }
.p-bias h2 { height: 29px; padding: 7px 0 0 0; }
.p-bias .note { padding-left: 11px; height: 80px; overflow: hidden; }
.p-bias .note i { height: 63px; }
.hovertools { position: absolute; left: 255px; top: 98px; }
.p-city { height: 167px; }
.p-city h2 { height: 27px; padding: 7px 0 0 0; font-size: 13.400px; }
.pc { font-size: 11px; fill: #605e5c; }
.fl { font-size: 11.500px; font-weight: 600; fill: #605e5c; }
.fv { font-size: 11.500px; font-weight: 700; fill: #fff; }
.page-edge { height: 2px; background: repeating-linear-gradient(90deg, #555 0 2px, #fff 2px 4px); }
.pages { height: 36px; background: #f3f2f1; display: flex; padding-left: 4px; border-bottom: 1px solid #dddbd9; }
.tab { width: 77px; height: 35px; background: #fff; border: solid #8a8886; border-width: 0 1px; text-align: center; font-weight: 600; line-height: 37px; border-bottom: 4px solid #117865; letter-spacing: -.4px; z-index: 1; }
.add { width: 39px; height: 32px; margin-top: 2px; background: #117865; display: flex; align-items: center; justify-content: center; }

/* side panes */
.filters { width: 182px; flex: none; background: #fff; border-left: 1px solid #a19f9d; border-right: 1px solid #d8d6d4; display: flex; flex-direction: column; }
aside header { height: 38px; display: flex; align-items: center; flex: none; }
h3 { font-size: 16px; font-weight: 600; letter-spacing: -.5px; }
.filters header { padding-left: 11px; height: 39px; }
.filters h3 { margin-left: 8px; }
.eye { margin-left: auto; }
.dbl { margin-left: 17px; margin-right: 10px; }
.f-search { height: 31px; width: 160px; margin: 6px 0 4px 8px; border: 1px solid #a19f9d; border-radius: 2px; display: flex; align-items: center; padding-left: 10px; gap: 13px; flex: none; }
.f-block { border-top: 1px solid #a19f9d; padding: 14px 7px 0 8px; height: 112px; letter-spacing: -.28px; }
.second { border: 0; padding-top: 0; }
.f-head { display: flex; justify-content: space-between; line-height: 22px; height: 27px; }
.f-head i { letter-spacing: 1px; color: #605e5c; padding-right: 3px; }
.f-drop { height: 46px; border: 1px solid #c8c6c4; border-radius: 2px; text-align: center; line-height: 46px; margin-right: 1px; }
.f-foot { margin-top: auto; height: 36px; background: #f3f2f1; border-bottom: 1px solid #dddbd9; }
.viz { width: 181px; flex: none; border-right: 1px solid #d8d6d4; border-bottom: 1px solid #dddbd9; }
.viz header { padding-left: 8px; }
.data header { padding-left: 7px; }
.viz .dbl, .data .dbl { margin-left: auto; margin-right: 8px; }
.v-sub { padding-left: 8px; font-weight: 600; line-height: 14px; height: 19px; letter-spacing: -.35px; }
.v-modes { display: flex; padding-left: 8px; gap: 34px; }
.v-mode { width: 32px; height: 32px; display: flex; align-items: center; justify-content: center; border-radius: 2px; }
.v-mode.on { background: #d2d0ce; }
.v-rule { margin-top: 4px; }
.v-grid { display: grid; grid-template-columns: repeat(6, 18px); gap: 10px; padding: 11px 0 0 11px; height: 207px; align-content: start; border-bottom: 1px solid #d8d6d4; margin-top: -1px; }
.v-grid svg { width: 18px; height: 18px; overflow: visible; }
.k { fill: none; stroke: #3b3a39; stroke-width: 1.100; }
.fillg { fill: #c8c6c4; }
.b { fill: #83bcec; stroke: #1f6cb5; stroke-width: 1.100; }
.g { fill: #c8c6c4; stroke: #8a8886; stroke-width: 1; }
.bl { fill: none; stroke: #1f6cb5; stroke-width: 1.200; }
.n { font-size: 8.500px; fill: #1f7fc4; letter-spacing: -.3px; }
.ltr { font-size: 15px; font-weight: 700; fill: #1f7fc4; }
.v-wells { padding: 7px 6px 0 4px; }
.v-label { line-height: 20px; padding-left: 8px; height: 23px; letter-spacing: -.2px; }
.v-label.strong { color: #4b4a48; font-weight: 600; margin-top: 10px; height: 20px; letter-spacing: -.3px; }
.v-drop { height: 28px; background: #fff; border: 1px dashed #c0bebc; border-radius: 2px; line-height: 28px; padding-left: 10px; letter-spacing: -.25px; }
.v-drop.drill { height: 26px; line-height: 26px; padding-left: 8px; margin-top: 5px; }
.v-row { display: flex; align-items: center; justify-content: space-between; padding: 0 16px 0 8px; height: 27px; letter-spacing: -.25px; }
.toggle { width: 32px; height: 16px; border: 1px solid #605e5c; border-radius: 8px; background: #fff; display: flex; align-items: center; padding: 0 4px; gap: 1px; font-size: 9px; color: #605e5c; }
.toggle i { width: 8px; height: 8px; border-radius: 50%; background: #605e5c; }
.toggle.on { background: #117865; border-color: #117865; color: #fff; font-weight: 600; }
.toggle.on i { background: #fff; }
.data { flex: 1; border-bottom: 1px solid #dddbd9; }
.d-search { width: 172px; height: 27px; margin: 7px 0 0 4px; border: 1px solid #7a7876; border-radius: 2px; display: flex; align-items: center; padding-left: 6px; gap: 6px; font-size: 12.600px; color: #605e5c; }
.data ul { list-style: none; padding-top: 9px; }
.data li { height: 24px; display: flex; align-items: center; padding-left: 15px; letter-spacing: -.4px; color: #323130; }
.data li svg { width: 27px; height: 13px; margin-right: 5px; fill: none; stroke: #323130; stroke-width: 1.200; }
.data li .ch { stroke: #797775; }

/* status bar */
.status { height: 23px; flex: none; display: flex; align-items: center; padding: 1px 18px 0 4px; color: #605e5c; letter-spacing: -.2px; }
.status span:first-child { margin-right: auto; }
.zoom { width: 42px; margin-left: 11px; font-size: 11.500px; }
.seam { height: 1px; flex: none; display: flex; justify-content: space-between; background: #fff; }
.seam i { width: 177px; background: #000; }
.seam i:last-child { width: 23px; }

/* taskbar */
.taskbar { height: 40px; flex: none; display: flex; color: #fff; background: linear-gradient(90deg, #3b3b34 0, #33332f 340px, #1f2124 480px, #1c1f23 900px, #30241f 1100px, #1f2024 1180px, #242528 1300px, #3d3d3d 1470px, #3a3a3a); }
.start { width: 48px; display: flex; align-items: center; justify-content: center; }
.t-search { width: 288px; background: #fff; border: 1px solid #a6a6a6; display: flex; align-items: center; padding-left: 11px; gap: 11px; color: #333; font-size: 14.200px; letter-spacing: -.2px; }
.t-apps { display: flex; align-items: center; gap: 25px; padding-left: 13px; }
.t-apps > svg, .t-active svg { width: 24px; height: 24px; }
.t-active { width: 47px; height: 40px; background: #4b4d50; border-bottom: 2px solid #76b9ed; margin-left: -12px; display: flex; align-items: center; justify-content: center; }
.t-tray { margin-left: auto; display: flex; align-items: center; }
.weather { font-size: 14px; letter-spacing: -.3px; margin-left: 9px; width: 93px; }
.clock { width: 62px; display: flex; flex-direction: column; text-align: center; font-size: 11.700px; line-height: 18px; margin-left: 4px; letter-spacing: -.3px; }
.notif { margin: 3px 0 0 11px; }
.copilot { margin-left: 12px; }
.peek { width: 1px; height: 40px; background: #777; margin: 0 4px 0 17px; }
```
